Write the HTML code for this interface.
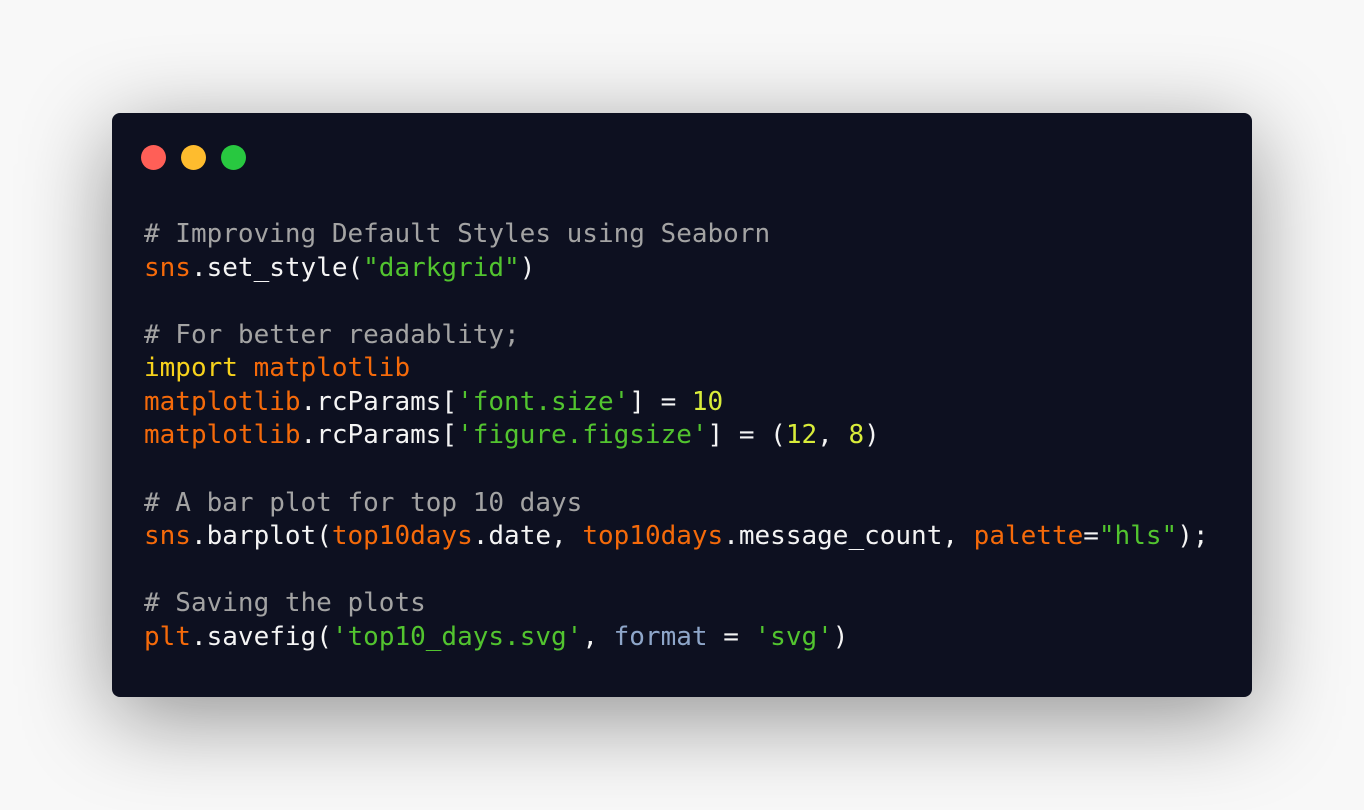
<!DOCTYPE html>
<html><head><style>
html,body{margin:0;padding:0;width:1364px;height:810px;background:#f8f8f8;overflow:hidden}
.card{position:absolute;left:112px;top:113px;width:1140px;height:584px;background:#0d1020;border-radius:8px;box-shadow:0 20px 90px rgba(0,0,0,0.42)}
.dot{position:absolute;top:32px;width:25px;height:25px;border-radius:50%}
pre{position:absolute;left:32px;top:105px;margin:0;font-family:"DejaVu Sans Mono","Liberation Mono",monospace;font-size:26px;line-height:33.58px;color:#f4f4f4}
.c{color:#a3a3a3}.o{color:#f56a0a}.g{color:#52c42f}.y{color:#f7d21c}.n{color:#d9ec3a}.b{color:#8ea6c9}
</style></head><body>
<div class="card">
<div class="dot" style="left:29px;background:#ff5f57"></div>
<div class="dot" style="left:69px;background:#febc2e"></div>
<div class="dot" style="left:109px;background:#28c840"></div>
<pre><span class="c"># Improving Default Styles using Seaborn</span>
<span class="o">sns</span>.set_style(<span class="g">"darkgrid"</span>)

<span class="c"># For better readablity;</span>
<span class="y">import</span> <span class="o">matplotlib</span>
<span class="o">matplotlib</span>.rcParams[<span class="g">'font.size'</span>] = <span class="n">10</span>
<span class="o">matplotlib</span>.rcParams[<span class="g">'figure.figsize'</span>] = (<span class="n">12</span>, <span class="n">8</span>)

<span class="c"># A bar plot for top 10 days</span>
<span class="o">sns</span>.barplot(<span class="o">top10days</span>.date, <span class="o">top10days</span>.message_count, <span class="o">palette</span>=<span class="g">"hls"</span>);

<span class="c"># Saving the plots</span>
<span class="o">plt</span>.savefig(<span class="g">'top10_days.svg'</span>, <span class="b">format</span> = <span class="g">'svg'</span>)</pre>
</div>
</body></html>
